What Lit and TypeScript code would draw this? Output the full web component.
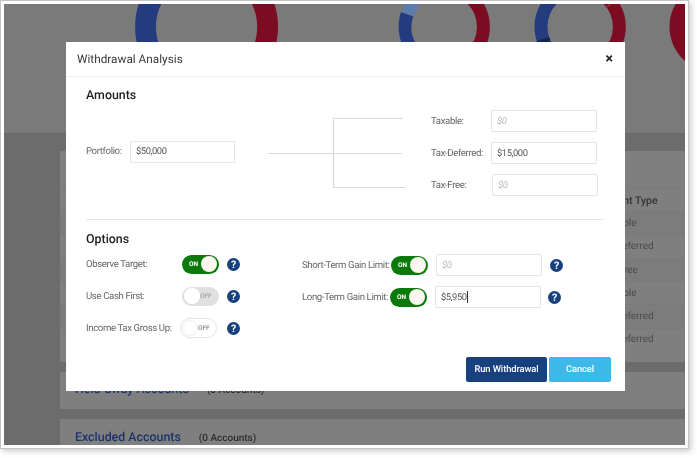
import { LitElement, html, css, svg } from "lit";
import { customElement } from "lit/decorators.js";

const BLUE = "#243c7d";
const RED = "#7b0c22";

function arc(cx: number, cy: number, r: number, a0: number, a1: number, color: string, w: number) {
  const rad = (a: number) => ((a - 90) * Math.PI) / 180;
  const x0 = cx + r * Math.cos(rad(a0));
  const y0 = cy + r * Math.sin(rad(a0));
  const x1 = cx + r * Math.cos(rad(a1));
  const y1 = cy + r * Math.sin(rad(a1));
  const large = a1 - a0 > 180 ? 1 : 0;
  return svg`<path d="M${x0} ${y0}A${r} ${r} 0 ${large} 1 ${x1} ${y1}" fill="none" stroke=${color} stroke-width=${w}/>`;
}

const rows = [
  { t: "Taxable", x: 542 },
  { t: "Tax-Deferred", x: 537 },
  { t: "Tax-Free", x: 540 },
  { t: "Taxable", x: 542 },
  { t: "Tax-Deferred", x: 537 },
  { t: "Tax-Deferred", x: 537 },
];

@customElement("app-root")
export class AppRoot extends LitElement {
  static styles = css`
    :host {
      display: block;
      width: 697px;
      height: 458px;
      overflow: hidden;
      background: #fff;
      font-family: Roboto, "Liberation Sans", sans-serif;
      text-rendering: geometricPrecision;
    }
    * { box-sizing: border-box; }
    .frame {
      width: 689px;
      height: 449px;
      border: 1px solid #c4c4c4;
      padding: 3px;
      background: #fff;
      box-shadow: 2px 2px 6px rgba(0, 0, 0, 0.22);
      filter: blur(0.35px);
    }
    .screen {
      position: relative;
      width: 681px;
      height: 441px;
      overflow: hidden;
      background: #6c6c6c;
    }
    .band {
      display: block;
      width: 681px;
      height: 130px;
      background: #7a7a7a;
      border-bottom: 1px solid #686868;
    }
    .cards {
      display: flex;
      flex-direction: column;
      gap: 10px;
      padding: 17px 0 0 56px;
    }
    .card { background: #7f7f7f; }
    .tablecard { height: 211px; padding-top: 37px; }
    .tr {
      display: flex;
      height: 23.3px;
      align-items: center;
      border-top: 1px solid #7a7a7a;
      font-size: 10px;
      color: #4a4a4a;
      white-space: nowrap;
    }
    .tr.even { background: #7c7c7c; }
    .tr.head { font-weight: 500; font-size: 10.5px; color: #333; padding-left: 533.5px; }
    .acct {
      display: flex;
      align-items: baseline;
      padding-left: 15px;
      color: #1d3468;
      font-size: 12.4px;
      font-weight: 500;
    }
    .acct small { font-size: 10px; color: #2b2b2b; margin-left: 18px; font-weight: 500; }
    .held { height: 37px; padding-top: 10px; }
    .excl { height: 40px; padding-top: 10.5px; }

    .modal {
      position: absolute;
      left: 62px;
      top: 38px;
      width: 559px;
      height: 349px;
      background: #fff;
      display: flex;
      flex-direction: column;
      color: #666;
      font-size: 9.6px;
      letter-spacing: -0.37px;
      white-space: nowrap;
    }
    .mhead {
      height: 35px;
      flex: none;
      display: flex;
      align-items: center;
      justify-content: space-between;
      padding: 0 12px 0 11px;
      border-bottom: 1px solid #f0f0f0;
      font-size: 11.8px;
      letter-spacing: 0;
      color: #3a3a3a;
    }
    .close { font-size: 14px; font-weight: 700; color: #222; line-height: 1; }
    .body { padding: 10px 21px 0 20px; flex: 1; display: flex; flex-direction: column; }
    h2 { margin: 0; font-size: 12.4px; font-weight: 500; color: #222; line-height: 18px; letter-spacing: 0; }
    .amounts { display: flex; height: 118px; margin-top: -4px; }
    .portfolio { display: flex; align-items: center; width: 182px; height: 101px; }
    .portfolio span { width: 44px; flex: none; }
    .tree { display: block; flex: none; margin-top: 17px; }
    .alloc {
      display: grid;
      grid-template-columns: 60px 106px;
      row-gap: 10px;
      align-items: center;
      margin: 9px 0 0 26px;
      align-content: start;
    }
    .field {
      height: 22px;
      width: 106px;
      border: 1px solid #e6e6e6;
      border-radius: 2px;
      padding: 0 5px;
      display: flex;
      align-items: center;
      color: #555;
      font-size: 9.4px;
      letter-spacing: -0.42px;
      background: #fff;
      box-shadow: 0 0 1px rgba(0,0,0,0.08);
    }
    .portfolio .field { width: 105px; }
    .ph { color: #b5b5b5; font-style: italic; }
    .shift { margin-left: 1px; }
    .caret { width: 1px; height: 12px; background: #333; }
    hr { border: none; border-top: 1px solid #e8e8e8; margin: 0; }
    .opts { margin-top: 11px; }
    .optgrid { display: flex; margin-top: 5px; }
    .col { display: flex; flex-direction: column; gap: 12px; }
    .left { width: 216px; }
    .row { display: flex; align-items: center; height: 20px; }
    .left .lbl { width: 96px; flex: none; }
    .right .lbl { width: 89px; flex: none; }
    .right .row { height: 22px; gap: 0; }
    .right { gap: 10px; margin-top: 0; }
    .toggle {
      width: 37px;
      height: 19px;
      border-radius: 10px;
      flex: none;
      display: flex;
      align-items: center;
      font-size: 6.5px;
      letter-spacing: 0;
      font-weight: 700;
      border: 1px solid transparent;
    }
    .toggle.on { background: #0b7a0b; color: #fff; justify-content: space-between; padding: 0 1px 0 6px; }
    .toggle.off { background: #e0e0e0; color: #aaa; padding: 0 7px 0 1px; justify-content: space-between; }
    .toggle.plain { background: #fff; color: #999; border-color: #e4e4e4; width: 37px; height: 20px; margin-left: -2px; margin-right: 2px; }
    .knob { width: 16px; height: 16px; border-radius: 50%; background: #fdf5f0; flex: none; }
    .off .knob { background: #fff; }
    .toggle.plain .knob { border: 1px solid #eee; }
    .help {
      width: 13px;
      height: 13px;
      border-radius: 50%;
      background: #17407f;
      color: #fff;
      font-size: 10.5px;
      letter-spacing: 0;
      font-weight: 700;
      display: flex;
      align-items: center;
      justify-content: center;
      flex: none;
    }
    .left .help { margin-left: 8px; }
    .right .toggle { margin-right: 8px; }
    .right .help { margin-left: 8px; }
    .long .lbl { width: 88px; }
    .long .help { margin-left: 7px; }
    .actions {
      position: absolute;
      right: 14px;
      bottom: 9px;
      display: flex;
      gap: 2px;
    }
    .btn {
      height: 25px;
      border-radius: 2px;
      display: flex;
      align-items: center;
      justify-content: center;
      color: #fff;
      font-size: 9.4px;
      letter-spacing: -0.1px;
      font-weight: 500;
    }
    .run { width: 81px; background: #17407f; }
    .cancel { width: 62px; background: #3db8e8; }
  `;

  private toggle(kind: "on" | "off" | "plain") {
    if (kind === "on") return html`<div class="toggle on"><span>ON</span><span class="knob"></span></div>`;
    return html`<div class="toggle ${kind === "off" ? "off" : "off plain"}"><span class="knob"></span><span>OFF</span></div>`;
  }

  render() {
    const c1y = 23;
    return html`
      <div class="frame">
        <div class="screen">
          <svg class="band" viewBox="0 0 681 130" width="681" height="130">
            ${arc(201.5, c1y, 61.5, 180, 360, BLUE, 21)}
            ${arc(201.5, c1y, 61.5, 0, 180, RED, 21)}
            ${arc(441, c1y, 39.5, 180, 289, BLUE, 13)}
            ${arc(441, c1y, 39.5, 289, 318, "#5c7cab", 13)}
            ${arc(441, c1y, 39.5, 318, 360, BLUE, 13)}
            ${arc(441, c1y, 39.5, 0, 180, RED, 13)}
            ${arc(578, c1y, 39.5, 180, 360, BLUE, 13)}
            ${arc(578, c1y, 39.5, 246, 252, "#14264f", 13)}
            ${arc(578, c1y, 39.5, 0, 180, RED, 13)}
            ${arc(578, c1y, 39.5, 52, 54, "#b03048", 13)}
            <circle cx="714" cy=${c1y} r="46" fill=${RED}></circle>
          </svg>
          <div class="cards">
            <div class="card tablecard">
              <div class="tr head"><span>Account Type</span></div>
              ${rows.map(
                (r, i) => html`<div class="tr ${i % 2 ? "" : "even"}" style="padding-left:${r.x}px"><span>${r.t}</span></div>`
              )}
            </div>
            <div class="card held acct">Held-away Accounts<small>(0 Accounts)</small></div>
            <div class="card excl acct">Excluded Accounts<small>(0 Accounts)</small></div>
          </div>

          <div class="modal">
            <div class="mhead"><span>Withdrawal Analysis</span><span class="close">×</span></div>
            <div class="body">
              <h2>Amounts</h2>
              <div class="amounts">
                <div class="portfolio">
                  <span>Portfolio:</span>
                  <div class="field">$50,000</div>
                </div>
                <svg class="tree" width="137" height="71" viewBox="0 0 137 71">
                  <path d="M0 35.5H134M65.5 0.5V69.5M65.5 0.5H135M65.5 69.5H137" fill="none" stroke="#d9d9d9" stroke-width="1.2"></path>
                </svg>
                <div class="alloc">
                  <span>Taxable:</span><div class="field ph">$0</div>
                  <span>Tax-Deferred:</span><div class="field">$15,000</div>
                  <span>Tax-Free:</span><div class="field ph shift">$0</div>
                </div>
              </div>
              <hr />
              <h2 class="opts">Options</h2>
              <div class="optgrid">
                <div class="col left">
                  <div class="row"><span class="lbl">Observe Target:</span>${this.toggle("on")}<span class="help">?</span></div>
                  <div class="row"><span class="lbl">Use Cash First:</span>${this.toggle("off")}<span class="help">?</span></div>
                  <div class="row"><span class="lbl">Income Tax Gross Up:</span>${this.toggle("plain")}<span class="help">?</span></div>
                </div>
                <div class="col right">
                  <div class="row"><span class="lbl">Short-Term Gain Limit:</span>${this.toggle("on")}<div class="field ph">$0</div><span class="help">?</span></div>
                  <div class="row long"><span class="lbl">Long-Term Gain Limit:</span>${this.toggle("on")}<div class="field">$5,950<span class="caret"></span></div><span class="help">?</span></div>
                </div>
              </div>
              <div class="actions">
                <div class="btn run">Run Withdrawal</div>
                <div class="btn cancel">Cancel</div>
              </div>
            </div>
          </div>
        </div>
      </div>
    `;
  }
}
